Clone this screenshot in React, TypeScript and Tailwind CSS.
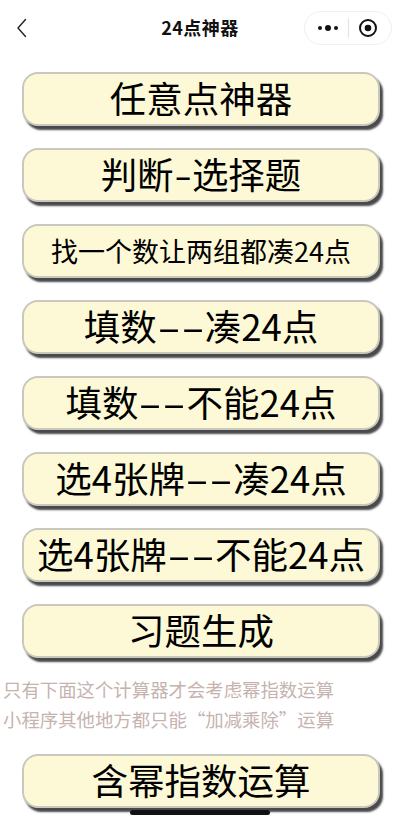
import React from 'react';

const font = { fontFamily: '"Noto Sans CJK SC", "Noto Sans", sans-serif' };

const buttons = [
    { label: '任意点神器', size: 'text-[36.5px]' },
    { label: '判断-选择题', size: 'text-[36.5px]' },
    { label: '找一个数让两组都凑24点', size: 'text-[27px]' },
    { label: '填数--凑24点', size: 'text-[36.5px]' },
    { label: '填数--不能24点', size: 'text-[36.5px]' },
    { label: '选4张牌--凑24点', size: 'text-[36.5px]' },
    { label: '选4张牌--不能24点', size: 'text-[36.5px]' },
    { label: '习题生成', size: 'text-[36.5px]' },
];

// the app's font draws "-" as a long thin dash, so widen it a bit
function Label({ text, wide }: { text: string; wide: boolean }) {
    const parts = text.split(/(-)/);
    return (
        <>
            {parts.map((p, i) =>
                p === '-' ? (
                    <span key={i} className={`inline-block text-center ${wide ? 'w-[0.66em] scale-x-[1.9]' : 'w-[0.5em] scale-x-[1.4]'}`}>
                        -
                    </span>
                ) : (
                    <span key={i}>{p}</span>
                )
            )}
        </>
    );
}

function Btn({ label, size }: { label: string; size: string }) {
    return (
        <button
            className={`ml-[22px] w-[358px] h-[54px] rounded-[16px] bg-[#fdf9d6] border-2 border-[#c9c8bf] shadow-[3px_4px_2px_#4a4a4a] flex items-center justify-center text-black leading-none ${size}`}
        >
            <span className="-mt-[2px] whitespace-nowrap">
                <Label text={label} wide={label.includes('--')} />
            </span>
        </button>
    );
}

export default function App() {
    return (
        <div className="relative w-[400px] min-h-[823px] bg-white overflow-hidden" style={font}>
            {/* Nav bar */}
            <div className="relative h-[56px] flex items-center justify-center">
                <svg className="absolute left-[16px] top-[18px]" width="12" height="20" viewBox="0 0 12 20" fill="none" stroke="#222" strokeWidth="1.4" strokeLinecap="round" strokeLinejoin="round">
                    <path d="M9.5 1.5 L2 10 L9.5 18.5" />
                </svg>
                <span className="text-[18px] font-semibold tracking-[0.5px] text-[#111] -mt-[1px]">24点神器</span>
                <div className="absolute right-[8px] top-[11px] w-[88px] h-[34px] rounded-full border border-[#f0f0f0] flex items-center">
                    <div className="flex-1 flex items-center justify-center gap-[3px] pl-1">
                        <span className="w-[4px] h-[4px] rounded-full bg-[#111]" />
                        <span className="w-[6px] h-[6px] rounded-full bg-[#111]" />
                        <span className="w-[4px] h-[4px] rounded-full bg-[#111]" />
                    </div>
                    <div className="w-px h-[20px] bg-[#e2e2e2]" />
                    <div className="flex-1 flex items-center justify-center pr-1">
                        <svg width="20" height="20" viewBox="0 0 20 20">
                            <circle cx="10" cy="10" r="8" fill="none" stroke="#111" strokeWidth="2" />
                            <circle cx="10" cy="10" r="3.3" fill="#111" />
                        </svg>
                    </div>
                </div>
            </div>

            <div className="pt-[16px] flex flex-col gap-[22px]">
                {buttons.map((b) => (
                    <Btn key={b.label} label={b.label} size={b.size} />
                ))}
            </div>

            <div className="mt-[16px] pl-[3px] text-[18.4px] leading-[30px] text-[#c6b3af] whitespace-nowrap">
                <div>只有下面这个计算器才会考虑幂指数运算</div>
                <div>小程序其他地方都只能“加减乘除”运算</div>
            </div>

            <div className="mt-[20px]">
                <Btn label="含幂指数运算" size="text-[36.5px]" />
            </div>

            {/* home indicator */}
            <div className="absolute left-[130px] top-[810px] w-[140px] h-[5px] rounded-full bg-[#111]" />
        </div>
    );
}
